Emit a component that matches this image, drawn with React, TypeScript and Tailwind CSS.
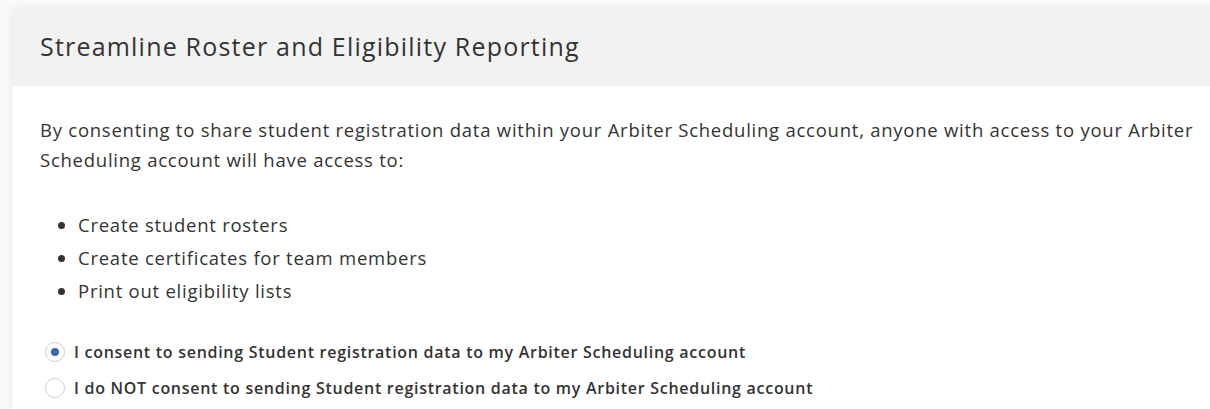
const bullets = ["Create student rosters", "Create certificates for team members", "Print out eligibility lists"];

const options = [
  { id: "yes", label: "I consent to sending Student registration data to my Arbiter Scheduling account", checked: true },
  { id: "no", label: "I do NOT consent to sending Student registration data to my Arbiter Scheduling account", checked: false }
];

export default function App() {
  return (
    <div className="h-[409px] overflow-hidden bg-[#fafafa] pl-[12px] pt-[8px] font-['Open_Sans',sans-serif] text-[#333]">
      <div className="h-full w-[1232px] rounded-tl-[5px] bg-white shadow-[0_0_8px_rgba(0,0,0,0.08)]">
        <div className="flex h-[78px] items-center rounded-tl-[5px] bg-[#f2f2f2] px-[28px]">
          <h1 className="text-[25px] font-normal tracking-[1.2px]">Streamline Roster and Eligibility Reporting</h1>
        </div>
        <div className="px-[28px] pt-[29px]">
          <p className="text-[18.5px] leading-[30px] tracking-[0.75px]">
            By consenting to share student registration data within your Arbiter Scheduling account, anyone with access to your Arbiter Scheduling account will have access to:
          </p>
          <ul className="mt-[33px] list-disc pl-[38px] text-[18.5px] leading-[33px] tracking-[0.75px]">
            {bullets.map((b) => (
              <li key={b}>{b}</li>
            ))}
          </ul>
          <div className="mt-[34px] flex flex-col gap-[14px]">
            {options.map((o) => (
              <label key={o.id} className="flex items-center gap-[9px] pl-[5px] text-[16px] font-semibold leading-[22px] tracking-[0.72px]">
                <span className="flex size-[20px] items-center justify-center rounded-full border border-[#d0d0d0] bg-white">
                  {o.checked && <span className="size-[8px] rounded-full bg-[#3d68b0]" />}
                </span>
                {o.label}
              </label>
            ))}
          </div>
        </div>
      </div>
    </div>
  );
}
